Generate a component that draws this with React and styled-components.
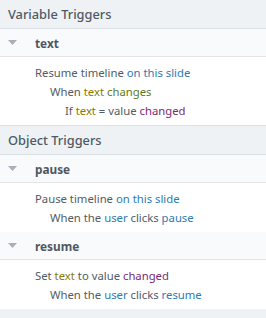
import React from 'react'
import styled, { createGlobalStyle } from 'styled-components'

const GlobalStyle = createGlobalStyle`
  html, body {
    margin: 0;
    padding: 0;
    background: #eef2f5;
  }
  body {
    font-family: 'Noto Sans', 'Open Sans', sans-serif;
    font-size: 11.3px;
    color: #535c66;
  }
`

const Panel = styled.div`
  width: 266px;
  height: 318px;
  overflow: hidden;
  background: #eef2f5;
`

const SectionHeader = styled.div`
  height: 28px;
  display: flex;
  align-items: center;
  padding-left: 8px;
  font-size: 12.8px;
  font-weight: 500;
  color: #4e5966;
  background: #eef2f5;
  border-top: ${(props) => (props.first ? 'none' : '1px solid #dbe1e7')};
  border-bottom: 1px solid #dbe1e7;
`

const TriggerRow = styled.div`
  height: 27px;
  display: flex;
  align-items: center;
  background: #f9fafb;
  border-bottom: 1px solid #e1e5ea;
`

const Caret = styled.span`
  width: 35px;
  padding-left: 8px;
  box-sizing: border-box;
  display: flex;
  align-items: center;
  svg {
    display: block;
  }
`

const TriggerName = styled.span`
  font-size: 11.8px;
  font-weight: 700;
  color: #4f5761;
`

const Body = styled.div`
  background: #fff;
  padding: 6px 0 5px;
`

const Line = styled.div`
  line-height: 19px;
  padding-left: ${(props) => 35 + props.indent * 15}px;
  white-space: nowrap;
`

const Tok = styled.span`
  color: ${(props) =>
    ({
      action: '#2b7bb4',
      var: '#8a7a00',
      event: '#5d7a1a',
      value: '#7b2a78',
      obj: '#2b7bb4',
    })[props.kind] || '#535c66'};
`

const TriangleDown = () => (
  <svg width="9" height="6" viewBox="0 0 9 6">
    <path d="M0 0 H9 L4.5 5 Z" fill="#a9afb6" />
  </svg>
)

const Trigger = ({ name, children }) => (
  <>
    <TriggerRow>
      <Caret>
        <TriangleDown />
      </Caret>
      <TriggerName>{name}</TriggerName>
    </TriggerRow>
    <Body>{children}</Body>
  </>
)

export default function App() {
  return (
    <Panel>
      <GlobalStyle />
      <SectionHeader first>Variable Triggers</SectionHeader>
      <Trigger name="text">
        <Line indent={0}>
          Resume timeline <Tok kind="action">on this slide</Tok>
        </Line>
        <Line indent={1}>
          When <Tok kind="var">text</Tok> <Tok kind="event">changes</Tok>
        </Line>
        <Line indent={2}>
          If <Tok kind="var">text</Tok> = value <Tok kind="value">changed</Tok>
        </Line>
      </Trigger>
      <SectionHeader>Object Triggers</SectionHeader>
      <Trigger name="pause">
        <Line indent={0}>
          Pause timeline <Tok kind="action">on this slide</Tok>
        </Line>
        <Line indent={1}>
          When the <Tok kind="obj">user</Tok> clicks <Tok kind="obj">pause</Tok>
        </Line>
      </Trigger>
      <Trigger name="resume">
        <Line indent={0}>
          Set <Tok kind="var">text</Tok> to value <Tok kind="value">changed</Tok>
        </Line>
        <Line indent={1}>
          When the <Tok kind="obj">user</Tok> clicks <Tok kind="obj">resume</Tok>
        </Line>
      </Trigger>
    </Panel>
  )
}
